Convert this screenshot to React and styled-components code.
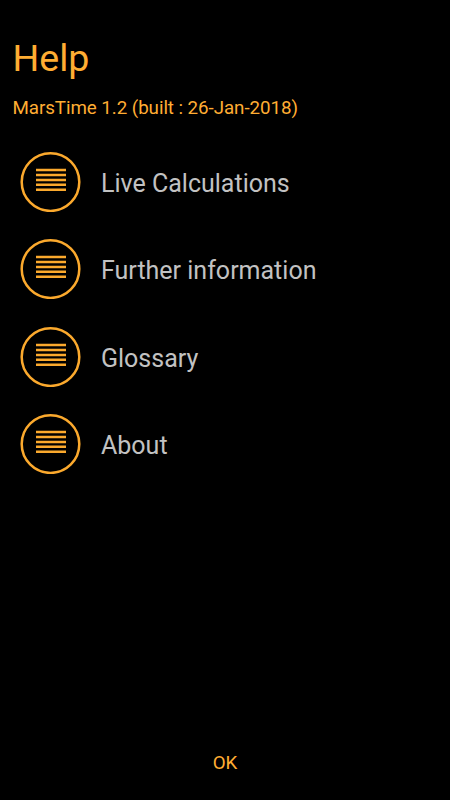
import React from 'react';
import styled, { createGlobalStyle } from 'styled-components';

const GlobalStyle = createGlobalStyle`
  * { box-sizing: border-box; }
  body { margin: 0; background: #000; font-family: Roboto, sans-serif; }
`;

const Screen = styled.main`
  display: flex;
  flex-direction: column;
  height: 100vh;
  min-height: 800px;
  background: #000;
`;

const Header = styled.header`
  padding: 36px 12.5px 0;
  color: #ffad33;
`;

const Title = styled.h1`
  margin: 0;
  font-size: 37.5px;
  line-height: 44px;
  font-weight: 400;
`;

const Version = styled.p`
  margin: 16px 0 0;
  font-size: 18.75px;
  line-height: 24px;
  letter-spacing: -0.06px;
`;

const Menu = styled.nav`
  display: flex;
  flex-direction: column;
  gap: 27.5px;
  padding: 31.9px 20px 0;
`;

const MenuItem = styled.button`
  display: flex;
  align-items: center;
  gap: 20px;
  height: 60px;
  padding: 0;
  border: 0;
  background: none;
  color: #c2c2c2;
  font: 400 25px/30px Roboto, sans-serif;
  text-align: left;
`;

const Icon = styled.svg`
  width: 61px;
  height: 60px;
  flex: none;
`;

const Label = styled.span`
  padding-top: 3.3px;
`;

const Footer = styled.footer`
  display: flex;
  justify-content: center;
  margin-top: auto;
  padding-bottom: 25px;
`;

const OkButton = styled.button`
  padding: 0;
  border: 0;
  background: none;
  color: #ffad33;
  font: 400 18.75px/24px Roboto, sans-serif;
`;

const items = ['Live Calculations', 'Further information', 'Glossary', 'About'];

function ListIcon() {
  return (
    <Icon viewBox="0 0 61 60" fill="none" stroke="#fba92d">
      <circle cx="30.5" cy="30.1" r="28.8" strokeWidth="2.5" />
      <path d="M16 18H46M16 23H46M16 27.9H46M16 32.8H46M16 37.7H46" strokeWidth="2.5" />
    </Icon>
  );
}

export default function App() {
  return (
    <>
      <GlobalStyle />
      <Screen>
        <Header>
          <Title>Help</Title>
          <Version>MarsTime 1.2 (built : 26-Jan-2018)</Version>
        </Header>
        <Menu>
          {items.map((item) => (
            <MenuItem key={item}>
              <ListIcon />
              <Label>{item}</Label>
            </MenuItem>
          ))}
        </Menu>
        <Footer>
          <OkButton>OK</OkButton>
        </Footer>
      </Screen>
    </>
  );
}
